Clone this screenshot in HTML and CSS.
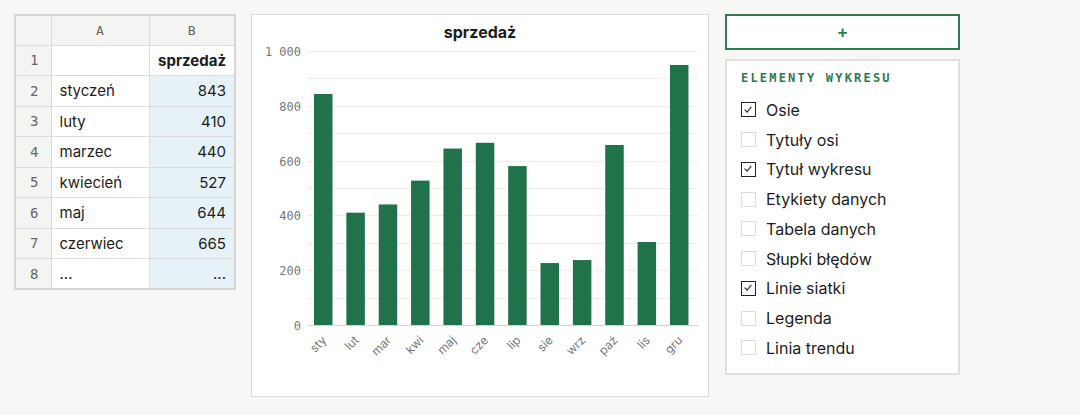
FILE: index.html
```html
<!DOCTYPE html>
<html lang="pl">
<head>
  <meta charset="UTF-8" />
  <title>Wykres sprzedaży</title>
  <link rel="stylesheet" href="styles.css">
</head>
<body>

  <!-- Arkusz -->
  <table class="sheet">
    <tr class="head">
      <th class="num"></th><th class="col-a">A</th><th class="col-b">B</th>
    </tr>
    <tr><td class="num">1</td><td></td><td class="label">sprzedaż</td></tr>
    <tr><td class="num">2</td><td>styczeń</td><td class="val">843</td></tr>
    <tr><td class="num">3</td><td>luty</td><td class="val">410</td></tr>
    <tr><td class="num">4</td><td>marzec</td><td class="val">440</td></tr>
    <tr><td class="num">5</td><td>kwiecień</td><td class="val">527</td></tr>
    <tr><td class="num">6</td><td>maj</td><td class="val">644</td></tr>
    <tr><td class="num">7</td><td>czerwiec</td><td class="val">665</td></tr>
    <tr><td class="num">8</td><td>...</td><td class="val">...</td></tr>
  </table>

  <!-- Wykres -->
  <div class="chart">
    <div class="chart-title">sprzedaż</div>
    <svg id="plot" width="456" height="354" viewBox="0 0 456 354"></svg>
  </div>

  <!-- Panel elementów -->
  <div class="side">
    <button class="add">+</button>
    <div class="elements">
      <div class="elements-title">ELEMENTY WYKRESU</div>
      <label class="item"><span class="box on"></span>Osie</label>
      <label class="item"><span class="box"></span>Tytuły osi</label>
      <label class="item"><span class="box on"></span>Tytuł wykresu</label>
      <label class="item"><span class="box"></span>Etykiety danych</label>
      <label class="item"><span class="box"></span>Tabela danych</label>
      <label class="item"><span class="box"></span>Słupki błędów</label>
      <label class="item"><span class="box on"></span>Linie siatki</label>
      <label class="item"><span class="box"></span>Legenda</label>
      <label class="item"><span class="box"></span>Linia trendu</label>
    </div>
  </div>

  <script>
    const data = [
      ['sty', 843], ['lut', 410], ['mar', 440], ['kwi', 527],
      ['maj', 644], ['cze', 665], ['lip', 580], ['sie', 226],
      ['wrz', 237], ['paź', 657], ['lis', 303], ['gru', 949]
    ];
    const svg = document.getElementById('plot');
    const NS = 'http://www.w3.org/2000/svg';
    const left = 55, right = 446, zero = 283, scale = 0.274;

    function el(name, attrs, text) {
      const n = document.createElementNS(NS, name);
      for (const k in attrs) n.setAttribute(k, attrs[k]);
      if (text !== undefined) n.textContent = text;
      svg.appendChild(n);
      return n;
    }

    // siatka co 100, opisy co 200
    for (let v = 0; v <= 1000; v += 100) {
      const y = Math.round(zero - v * scale) + 0.5;
      el('line', { x1: left, x2: right, y1: y, y2: y, class: v === 0 ? 'axis' : 'grid' });
      if (v % 200 === 0) {
        el('text', { x: 49, y: y + 4, class: 'ytick' }, v === 1000 ? '1 000' : v);
      }
    }

    const pitch = 32.36, barW = 18.5;
    data.forEach(([name, v], i) => {
      const x = 62 + i * pitch;
      const h = v * scale;
      el('rect', { x: x, y: zero - h, width: barW, height: h, class: 'bar' });
      const cx = x + barW / 2 + 4;
      el('text', { x: 0, y: 0, class: 'xtick', transform: `translate(${cx} 299) rotate(-45)` }, name);
    });
  </script>
</body>
</html>
```

FILE: styles.css
```css
:root {
  --bg: #f7f7f5;
  --line: #dcdcdc;
  --green: #1f7249;
  --green-text: #2b7a50;
  --text: #1d1d1d;
  --muted: #7a7a7a;
}

* {
  box-sizing: border-box;
}

body {
  margin: 0;
  padding: 14px;
  background: var(--bg);
  font-family: Inter, "Noto Sans", sans-serif;
  color: var(--text);
  display: flex;
  align-items: flex-start;
}

/* arkusz */
.sheet {
  border-collapse: collapse;
  border: 2px solid #d6d6d4;
  background: #fff;
  font-size: 15px;
}

.sheet td,
.sheet th {
  border: 1px solid var(--line);
  height: 30.5px;
  padding: 0 8px;
  font-weight: 400;
}

.sheet .head th {
  background: #f4f4f2;
  font-family: "DejaVu Sans Mono", monospace;
  font-size: 13px;
  color: #666;
  height: 30px;
}

.sheet .num {
  width: 36px;
  background: #f4f4f2;
  font-family: "DejaVu Sans Mono", monospace;
  font-size: 14px;
  color: #666;
  text-align: left;
  padding-left: 14px;
}

.sheet .col-a { width: 98px; }
.sheet .col-b { width: 86px; }

.sheet .label {
  font-weight: 700;
  text-align: right;
}

.sheet .val {
  background: #e6f2f8;
  text-align: right;
}

/* wykres */
.chart {
  margin-left: 15px;
  width: 458px;
  height: 383px;
  background: #fff;
  border: 1px solid var(--line);
}

.chart-title {
  text-align: center;
  font-weight: 700;
  font-size: 16px;
  padding-top: 7px;
  height: 27px;
}

#plot {
  display: block;
}

#plot .grid {
  stroke: #ececec;
  stroke-width: 1;
}

#plot .axis {
  stroke: #d4d4d4;
  stroke-width: 1;
}

#plot .bar {
  fill: var(--green);
}

#plot .ytick {
  font-family: "DejaVu Sans Mono", monospace;
  font-size: 12px;
  fill: #777;
  text-anchor: end;
}

#plot .xtick {
  font-family: Inter, sans-serif;
  font-size: 12px;
  fill: #777;
  text-anchor: end;
}

/* panel */
.side {
  margin-left: 16px;
  width: 235px;
  display: flex;
  flex-direction: column;
  gap: 9px;
}

.add {
  height: 36px;
  background: #fff;
  border: 2px solid #2e7a52;
  color: var(--green-text);
  font-size: 16px;
  font-weight: 700;
  font-family: "DejaVu Sans Mono", monospace;
}

.elements {
  background: #fff;
  border: 2px solid #e0e0de;
  padding: 10px 14px 10px;
}

.elements-title {
  font-family: "DejaVu Sans Mono", monospace;
  font-weight: 700;
  font-size: 12px;
  letter-spacing: 2.2px;
  color: var(--green-text);
  margin-bottom: 10px;
}

.item {
  display: flex;
  align-items: center;
  gap: 10px;
  height: 29.75px;
  font-size: 16px;
}

.box {
  width: 15px;
  height: 15px;
  border: 1px solid #dcdcdc;
  position: relative;
}

.box.on {
  border: 1.5px solid #222;
}

.box.on::after {
  content: '';
  position: absolute;
  left: 4px;
  top: 1.5px;
  width: 2.5px;
  height: 6px;
  border-right: 1.5px solid #222;
  border-bottom: 1.5px solid #222;
  transform: rotate(40deg);
}
```
